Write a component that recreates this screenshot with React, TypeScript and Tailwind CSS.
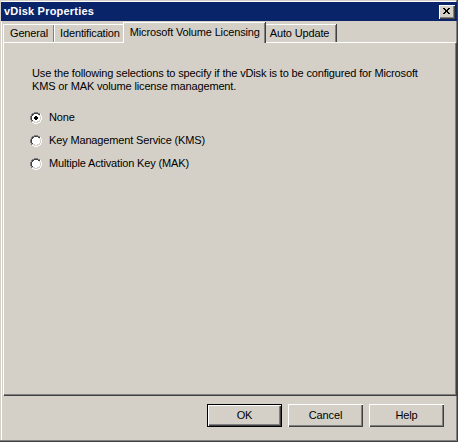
import React from "react";

function Radio({ checked }: { checked?: boolean }) {
  return (
    <svg width="12" height="12" viewBox="0 0 12 12" className="shrink-0">
      <path d="M4 0h4M2 1h2M8 1h2M1 2h1M1 3h1M0 4h1M0 5h1M0 6h1M0 7h1M1 8h1M1 9h1" stroke="#808080" strokeWidth="1" transform="translate(0,0.5)" />
      <path d="M4 1h4M2 2h2M8 2h2M2 3h1M1 4h1M1 5h1M1 6h1M1 7h1M2 8h1" stroke="#404040" strokeWidth="1" transform="translate(0,0.5)" />
      <path d="M10 2h1M10 3h1M11 4h1M11 5h1M11 6h1M11 7h1M10 8h1M10 9h1M2 10h2M8 10h2M4 11h4" stroke="#ffffff" strokeWidth="1" transform="translate(0,0.5)" />
      <path d="M9 3h1M10 4h1M10 5h1M10 6h1M10 7h1M9 8h1M3 9h2M7 9h2M4 10h4M2 9h1M9 9h1" stroke="#d4d0c8" strokeWidth="1" transform="translate(0,0.5)" />
      <path d="M4 2h4M3 3h6M2 4h8M2 5h8M2 6h8M2 7h8M3 8h6M5 9h2" stroke="#ffffff" strokeWidth="1" transform="translate(0,0.5)" />
      {checked && <path d="M5 4h2M4 5h4M4 6h4M5 7h2" stroke="#000000" strokeWidth="1" transform="translate(0,0.5)" />}
    </svg>
  );
}

function Tab({ label, selected, pad }: { label: string; selected?: boolean; pad: string }) {
  if (selected) {
    return (
      <div className={"relative -mx-[2px] h-[21px] z-10 bg-[#d4d0c8] border-l border-t border-white shadow-[inset_-1px_0_0_#808080,1px_0_0_#404040] rounded-tl-[1px] pt-[2px] mb-[-1px] leading-[14px] " + pad}>
        {label}
      </div>
    );
  }
  return (
    <div className={"h-[18px] bg-[#d4d0c8] border-l border-t border-white shadow-[inset_-1px_0_0_#808080,1px_0_0_#404040] pt-[1px] leading-[14px] " + pad}>
      {label}
    </div>
  );
}

function Button({ label, def }: { label: string; def?: boolean }) {
  return (
    <div
      className={
        "w-[75px] h-[23px] flex items-center justify-center bg-[#d4d0c8] " +
        (def
          ? "border border-black shadow-[inset_1px_1px_0_#ffffff,inset_-1px_-1px_0_#404040,inset_-2px_-2px_0_#808080]"
          : "shadow-[inset_1px_1px_0_#ffffff,inset_-1px_-1px_0_#404040,inset_-2px_-2px_0_#808080]")
      }
    >
      {label}
    </div>
  );
}

export default function App() {
  return (
    <div
      className="w-[458px] h-[442px] bg-[#d4d0c8] text-black text-[11px] tracking-[-0.15px] flex flex-col shadow-[inset_-1px_-1px_0_#404040,inset_-2px_-2px_0_#808080,inset_1px_1px_0_#d4d0c8,inset_2px_2px_0_#ffffff]"
      style={{ fontFamily: "Tahoma, 'Liberation Sans', Arial, sans-serif" }}
    >
      <div className="mt-[2px] mx-[1px] h-[19px] bg-[#0a246a] flex items-center justify-between pl-[3px] pr-[2px]">
        <span className="text-white font-bold text-[11px] tracking-[0.2px]">vDisk Properties</span>
        <div className="w-[16px] h-[14px] bg-[#d4d0c8] flex items-center justify-center shadow-[inset_1px_1px_0_#ffffff,inset_-1px_-1px_0_#404040,inset_-2px_-2px_0_#808080]">
          <svg width="8" height="7" viewBox="0 0 8 7">
            <path d="M0 0L6 6M1 0L7 6M6 0L0 6M7 0L1 6" stroke="#000" strokeWidth="1" shapeRendering="crispEdges" />
          </svg>
        </div>
      </div>
      <div className="flex items-end pl-[3px] pt-[1px] h-[21px]">
        <Tab label="General" pad="px-[6px]" />
        <Tab label="Identification" pad="px-[5px]" />
        <Tab label="Microsoft Volume Licensing" selected pad="pl-[6px] pr-[5px]" />
        <Tab label="Auto Update" pad="pl-[6px] pr-[7px]" />
      </div>
      <div className="ml-[3px] mr-[2px] h-[353px] border-l border-t border-white shadow-[inset_-1px_-1px_0_#808080,1px_1px_0_#404040] pl-[28px] pt-[24px]">
        <p className="leading-[13px]">
          Use the following selections to specify if the vDisk is to be configured for Microsoft
          <br />
          KMS or MAK volume license management.
        </p>
        <div className="flex flex-col gap-[10px] mt-[18px] -ml-[2px]">
          <div className="flex items-center gap-[7px] h-[13px]">
            <Radio checked />
            <span>None</span>
          </div>
          <div className="flex items-center gap-[7px] h-[13px]">
            <Radio />
            <span>Key Management Service (KMS)</span>
          </div>
          <div className="flex items-center gap-[7px] h-[13px]">
            <Radio />
            <span>Multiple Activation Key (MAK)</span>
          </div>
        </div>
      </div>
      <div className="flex justify-end gap-[6px] pr-[14px] mt-[9px]">
        <Button label="OK" def />
        <Button label="Cancel" />
        <Button label="Help" />
      </div>
    </div>
  );
}
